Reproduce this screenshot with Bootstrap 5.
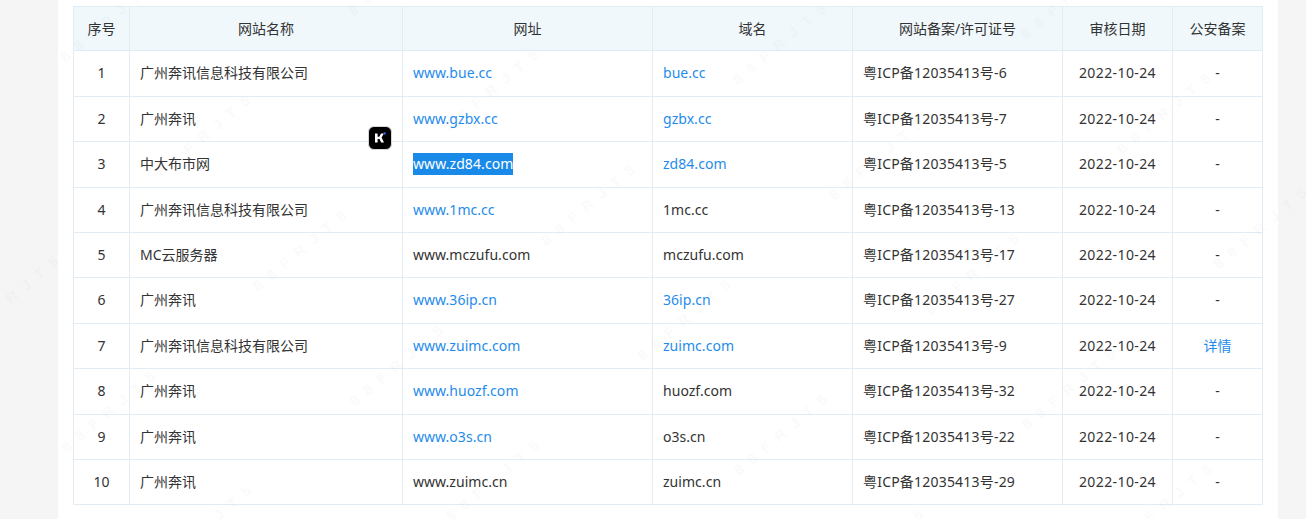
<!doctype html>
<html lang="zh"><head><meta charset="utf-8">
<link href="https://cdn.jsdelivr.net/npm/bootstrap@5.3.0/dist/css/bootstrap.min.css" rel="stylesheet">
<style>
html,body{height:519px;overflow:hidden}
body{background:#f5f5f5;font-family:"Noto Sans","Noto Sans CJK SC",sans-serif;font-size:14px;color:#333}
.sheet{width:1220px;margin-left:58px;height:519px;background:#fff;padding:6px 15px 0;position:relative}
.rec-table{width:1190px;table-layout:fixed;border-collapse:collapse;margin:0}
.rec-table th,.rec-table td{border:1px solid #e2ecf5;text-align:center;vertical-align:middle;padding:0 10px 1px;font-weight:400;color:#333;line-height:22px}
.rec-table th{background:#f0f8fc;height:44px;padding-bottom:0}
.rec-table tbody tr{height:46px}
.rec-table tbody tr:nth-child(2),.rec-table tbody tr:nth-child(4),.rec-table tbody tr:nth-child(5),.rec-table tbody tr:nth-child(7),.rec-table tbody tr:nth-child(9),.rec-table tbody tr:nth-child(10){height:45px}
.rec-table tbody tr:nth-child(2) td,.rec-table tbody tr:nth-child(4) td,.rec-table tbody tr:nth-child(5) td,.rec-table tbody tr:nth-child(7) td,.rec-table tbody tr:nth-child(9) td,.rec-table tbody tr:nth-child(10) td{padding-bottom:0}
.rec-table td.lft{text-align:left}
.rec-table td:nth-child(3),.rec-table td:nth-child(4){letter-spacing:.04px}
.rec-table td:nth-child(5){letter-spacing:.2px}
.rec-table td:nth-child(6){letter-spacing:.4px}
.rec-table a{color:#1f8ceb;text-decoration:none}
.picked{background:#1a8ae8;color:#fff;display:inline-block;line-height:22px;letter-spacing:.08px}
.kbadge{position:absolute;left:310px;top:126px;width:24px;height:24px;border-radius:6px;background:#000;border:1px solid #d8d8d8;display:flex;align-items:center;justify-content:center}
.wmark{position:absolute;left:-58px;top:0;width:1306px;height:519px;pointer-events:none}
.wmark text{font:700 15px "Liberation Sans",sans-serif;fill:#000;fill-opacity:.02;letter-spacing:9px}
</style></head><body>
<div class="sheet">
<table class="rec-table">
<colgroup><col style="width:56px"><col style="width:273px"><col style="width:250px"><col style="width:200px"><col style="width:210px"><col style="width:110px"><col style="width:90px"></colgroup>
<thead><tr><th>序号</th><th>网站名称</th><th>网址</th><th>域名</th><th>网站备案/许可证号</th><th>审核日期</th><th>公安备案</th></tr></thead>
<tbody>
<tr><td>1</td><td class="lft">广州奔讯信息科技有限公司</td><td class="lft"><a href="#">www.bue.cc</a></td><td class="lft"><a href="#">bue.cc</a></td><td class="lft">粤ICP备12035413号-6</td><td>2022-10-24</td><td>-</td></tr>
<tr><td>2</td><td class="lft">广州奔讯</td><td class="lft"><a href="#">www.gzbx.cc</a></td><td class="lft"><a href="#">gzbx.cc</a></td><td class="lft">粤ICP备12035413号-7</td><td>2022-10-24</td><td>-</td></tr>
<tr><td>3</td><td class="lft">中大布市网</td><td class="lft"><span class="picked">www.zd84.com</span></td><td class="lft"><a href="#">zd84.com</a></td><td class="lft">粤ICP备12035413号-5</td><td>2022-10-24</td><td>-</td></tr>
<tr><td>4</td><td class="lft">广州奔讯信息科技有限公司</td><td class="lft"><a href="#">www.1mc.cc</a></td><td class="lft">1mc.cc</td><td class="lft">粤ICP备12035413号-13</td><td>2022-10-24</td><td>-</td></tr>
<tr><td>5</td><td class="lft">MC云服务器</td><td class="lft">www.mczufu.com</td><td class="lft">mczufu.com</td><td class="lft">粤ICP备12035413号-17</td><td>2022-10-24</td><td>-</td></tr>
<tr><td>6</td><td class="lft">广州奔讯</td><td class="lft"><a href="#">www.36ip.cn</a></td><td class="lft"><a href="#">36ip.cn</a></td><td class="lft">粤ICP备12035413号-27</td><td>2022-10-24</td><td>-</td></tr>
<tr><td>7</td><td class="lft">广州奔讯信息科技有限公司</td><td class="lft"><a href="#">www.zuimc.com</a></td><td class="lft"><a href="#">zuimc.com</a></td><td class="lft">粤ICP备12035413号-9</td><td>2022-10-24</td><td><a href="#">详情</a></td></tr>
<tr><td>8</td><td class="lft">广州奔讯</td><td class="lft"><a href="#">www.huozf.com</a></td><td class="lft">huozf.com</td><td class="lft">粤ICP备12035413号-32</td><td>2022-10-24</td><td>-</td></tr>
<tr><td>9</td><td class="lft">广州奔讯</td><td class="lft"><a href="#">www.o3s.cn</a></td><td class="lft">o3s.cn</td><td class="lft">粤ICP备12035413号-22</td><td>2022-10-24</td><td>-</td></tr>
<tr><td>10</td><td class="lft">广州奔讯</td><td class="lft">www.zuimc.cn</td><td class="lft">zuimc.cn</td><td class="lft">粤ICP备12035413号-29</td><td>2022-10-24</td><td>-</td></tr>
</tbody></table>
<svg class="wmark" aria-hidden="true"><defs><pattern id="wm" width="250" height="150" patternUnits="userSpaceOnUse" patternTransform="rotate(-40)"><text x="10" y="90">88FRJT5</text></pattern></defs><rect width="1306" height="519" fill="url(#wm)"/></svg>
<div class="kbadge"><svg width="16" height="16" viewBox="0 0 16 16"><path d="M3 3.5h2.6v3.3h1.7L9 3.5h2.8L9.6 7.6 12 12.5H9.2L7.5 9.1H5.6v3.4H3z" fill="#fff"/><circle cx="12.6" cy="3.4" r="1.2" fill="#2f6bff"/></svg></div>
</div>
<script src="https://cdn.jsdelivr.net/npm/bootstrap@5.3.0/dist/js/bootstrap.bundle.min.js"></script>
</body></html>
